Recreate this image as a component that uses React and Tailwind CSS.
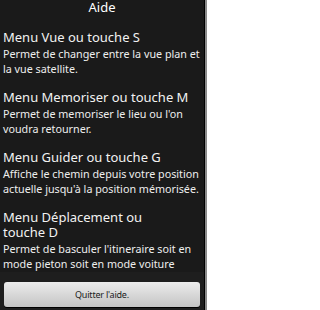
const sections = [
    {
        title: 'Menu Vue ou touche S',
        text: 'Permet de changer entre la vue plan et la vue satellite.',
    },
    {
        title: 'Menu Memoriser ou touche M',
        text: "Permet de memoriser le lieu ou l'on voudra retourner.",
    },
    {
        title: 'Menu Guider ou touche G',
        text: "Affiche le chemin depuis votre position actuelle jusqu'à la position mémorisée.",
    },
    {
        title: 'Menu Déplacement ou\ntouche D',
        text: "Permet de basculer l'itineraire soit en mode pieton soit en mode voiture",
    },
];

const Section = ({ title, text }) => (
    <div className="mb-[13px] last:mb-0">
        <h2 className="whitespace-pre-line text-[13px] leading-[15px] text-[#f2f2f2]">{title}</h2>
        <p className="mt-[2px] text-[10.75px] leading-[15px] text-[#eeeeee]">{text}</p>
    </div>
);

export default function App() {
    return (
        <div className="flex h-[310px] w-[207px] overflow-hidden bg-[#1a1a1a] font-['Noto_Sans','Open_Sans',sans-serif]">
            <div className="flex w-[204px] flex-col">
                <h1 className="text-center text-[13px] leading-[15px] text-white">Aide</h1>

                {/* Help entries */}
                <div className="mt-[15px] pl-[3px] pr-[2px]">
                    {sections.map((s, idx) => (
                        <Section key={idx} {...s} />
                    ))}
                </div>

                {/* Bottom button bar */}
                <div className="mt-auto flex h-[38px] shrink-0 items-start bg-[#1e1e1e] px-[4px] pt-[10px]">
                    <button className="h-[25px] w-full rounded-[3px] bg-gradient-to-b from-[#ececec] to-[#c4c4c4] text-[9px] tracking-[-0.2px] text-[#222222] shadow-[0_1px_0_#000]">
                        Quitter l'aide.
                    </button>
                </div>
            </div>
            <div className="w-px bg-black" />
            <div className="w-[2px] bg-[#8a8a8a]" />
        </div>
    );
}
